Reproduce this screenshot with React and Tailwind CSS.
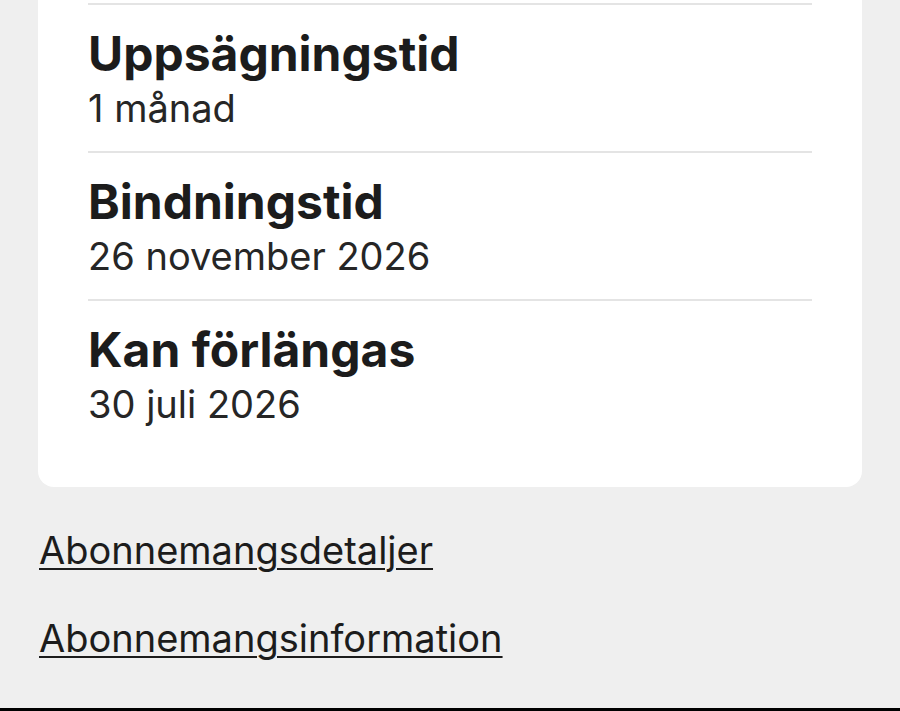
import React from "react";

const rows = [
  { title: "Uppsägningstid", value: "1 månad" },
  { title: "Bindningstid", value: "26 november 2026" },
  { title: "Kan förlängas", value: "30 juli 2026" },
];

export default function App() {
  return (
    <div className="min-h-[711px] bg-[#efefef] font-['Inter',sans-serif] text-[#1c1c1c] flex flex-col">
      {/* Card (top is scrolled off) */}
      <div className="mx-[38px] w-[824px] bg-white rounded-b-[16px] pt-[3px] pb-[57px] px-[50px]">
        {rows.map((r, i) => (
          <div
            key={r.title}
            className={`border-t-2 border-[#e4e4e4] pt-[21px] ${i === rows.length - 1 ? "pb-0" : "pb-[17px]"}`}
          >
            <div className="text-[48px] leading-[56px] font-bold">{r.title}</div>
            <div className="text-[38px] leading-[52px] text-[#262626]">{r.value}</div>
          </div>
        ))}
      </div>

      {/* Links */}
      <div className="flex flex-col items-start px-[39px] pt-[41px] gap-[44px]">
        <a href="#" className="text-[38px] leading-[44px] underline underline-offset-[4px] decoration-2 text-[#1c1c1c]">
          Abonnemangsdetaljer
        </a>
        <a href="#" className="text-[38px] leading-[44px] underline underline-offset-[4px] decoration-2 text-[#1c1c1c]">
          Abonnemangsinformation
        </a>
      </div>

      <div className="flex-1" />
      <div className="h-[3px] bg-black" />
    </div>
  );
}
